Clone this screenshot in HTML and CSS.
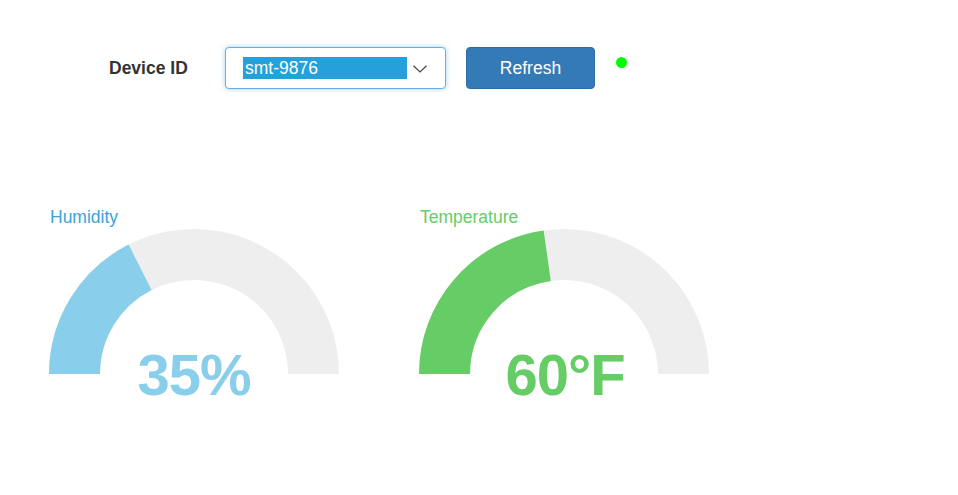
FILE: index.html
```html
<!DOCTYPE html>
<html>
<head>
<meta charset="utf-8">
<link rel="stylesheet" href="styles.css">
</head>
<body>
<div class="toolbar">
  <label class="device-label">Device ID</label>
  <div class="select">
    <span class="select-value">smt-9876</span>
    <svg class="chevron" width="14" height="8" viewBox="0 0 14 8"><path d="M0.5 0.8 L7 7 L13.5 0.8" fill="none" stroke="#444" stroke-width="1.2"/></svg>
  </div>
  <button class="btn">Refresh</button>
  <span class="status-dot"></span>
</div>
<div class="gauges">
  <div class="gauge gauge-humidity">
    <div class="gauge-title">Humidity</div>
    <svg class="gauge-svg" width="290" height="180" viewBox="0 0 290 180">
      <path class="track" d="M 25.5 145 A 119.5 119.5 0 0 1 264.5 145" pathLength="100"/>
      <path class="fill" d="M 25.5 145 A 119.5 119.5 0 0 1 264.5 145" pathLength="100" stroke-dasharray="35.1 100"/>
      <text class="value" x="145" y="166" text-anchor="middle">35%</text>
    </svg>
  </div>
  <div class="gauge gauge-temp">
    <div class="gauge-title">Temperature</div>
    <svg class="gauge-svg" width="290" height="180" viewBox="0 0 290 180">
      <path class="track" d="M 25.5 145 A 119.5 119.5 0 0 1 264.5 145" pathLength="100"/>
      <path class="fill" d="M 25.5 145 A 119.5 119.5 0 0 1 264.5 145" pathLength="100" stroke-dasharray="45.5 100"/>
      <text class="value" x="146" y="166" text-anchor="middle">60°F</text>
    </svg>
  </div>
</div>
</body>
</html>
```
FILE: styles.css
```css
html, body {
  margin: 0;
  padding: 0;
  background: #fff;
  font-family: "Liberation Sans", Arial, sans-serif;
  font-size: 17.5px;
}
.toolbar {
  display: flex;
  align-items: center;
  padding: 47px 0 0 109px;
  height: 42px;
}
.device-label {
  width: 116px;
  font-weight: bold;
  color: #333;
}
.select {
  box-sizing: border-box;
  width: 221px;
  height: 42px;
  border: 1px solid #66afe9;
  border-radius: 4px;
  box-shadow: 0 0 5px rgba(102, 175, 233, 0.6);
  display: flex;
  align-items: center;
  padding-left: 17px;
  background: #fff;
}
.select-value {
  display: block;
  width: 162px;
  height: 22px;
  line-height: 22px;
  background: #26a0da;
  color: #fff;
  padding-left: 2px;
}
.chevron {
  margin-left: 6px;
  margin-top: 1px;
}
.btn {
  box-sizing: border-box;
  margin-left: 20px;
  width: 129px;
  height: 42px;
  background: #337ab7;
  border: 1px solid #2e6da4;
  border-radius: 4px;
  color: #fff;
  font-family: inherit;
  font-size: 17.5px;
  padding: 0;
}
.status-dot {
  align-self: flex-start;
  margin: 10px 0 0 21px;
  width: 11px;
  height: 11px;
  border-radius: 50%;
  background: #00ff00;
}
.gauges {
  display: flex;
  gap: 80px;
  padding: 117px 0 0 49px;
}
.gauge {
  width: 290px;
}
.gauge-title {
  line-height: 20px;
  padding-top: 1px;
  margin-bottom: 2px;
  padding-left: 1px;
}
.gauge-svg {
  display: block;
}
.track {
  fill: none;
  stroke: #eeeeee;
  stroke-width: 51;
}
.fill {
  fill: none;
  stroke-width: 51;
}
.value {
  font-family: "Liberation Sans", Arial, sans-serif;
  font-weight: bold;
  font-size: 58px;
  letter-spacing: -1px;
}
.gauge-humidity .gauge-title { color: #3ba3d8; }
.gauge-humidity .fill { stroke: #89cfeb; }
.gauge-humidity .value { fill: #89cfeb; }
.gauge-temp .gauge-title { color: #66cc66; }
.gauge-temp .fill { stroke: #66cc66; }
.gauge-temp .value { fill: #66cc66; }
```
